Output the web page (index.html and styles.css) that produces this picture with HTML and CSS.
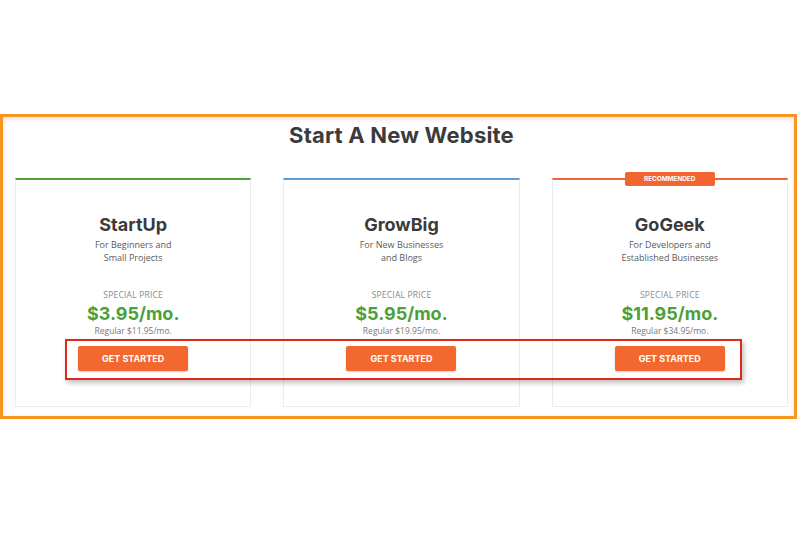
FILE: index.html
```html
<!DOCTYPE html>
<html>
<head>
<title>Start A New Website</title>
<link rel="stylesheet" href="styles.css">
</head>
<body>

<div class="shot">
	<div class="frame">
		<h1 class="page_title">Start A New Website</h1>
		<div class="plans">
			<div class="plan plan_green">
				<div class="plan_name">StartUp</div>
				<div class="plan_desc">For Beginners and<br>Small Projects</div>
				<div class="plan_label">SPECIAL PRICE</div>
				<div class="plan_price">$3.95/mo.</div>
				<div class="plan_regular">Regular $11.95/mo.</div>
				<button class="get_btn">GET STARTED</button>
			</div>
			<div class="plan plan_blue">
				<div class="plan_name">GrowBig</div>
				<div class="plan_desc">For New Businesses<br>and Blogs</div>
				<div class="plan_label">SPECIAL PRICE</div>
				<div class="plan_price">$5.95/mo.</div>
				<div class="plan_regular">Regular $19.95/mo.</div>
				<button class="get_btn">GET STARTED</button>
			</div>
			<div class="plan plan_orange">
				<div class="badge">RECOMMENDED</div>
				<div class="plan_name">GoGeek</div>
				<div class="plan_desc">For Developers and<br>Established Businesses</div>
				<div class="plan_label">SPECIAL PRICE</div>
				<div class="plan_price">$11.95/mo.</div>
				<div class="plan_regular">Regular $34.95/mo.</div>
				<button class="get_btn">GET STARTED</button>
			</div>
		</div>
	</div>
	<div class="highlight"></div>
</div>

</body>
</html>
```

FILE: styles.css
```css
	body
	{
		margin : 0;
		background-color : white;
		font-family : "Open Sans", sans-serif;
	}
	.shot
	{
		position : relative;
		width : 800px;
		height : 533px;
		padding-top : 114px;
		box-sizing : border-box;
	}
	.frame
	{
		width : 797px;
		border : 3px solid #f7961f;
		box-sizing : border-box;
		box-shadow : inset 0 2px 5px rgba(0,0,0,0.12);
		padding : 0 6px 9px 12px;
	}
	.page_title
	{
		margin : 0;
		padding-top : 4px;
		height : 61px;
		box-sizing : border-box;
		text-align : center;
		font-family : Inter, sans-serif;
		font-weight : 700;
		font-size : 22px;
		line-height : 28px;
		color : #3b3b3b;
		letter-spacing : 0.2px;
	}
	.plans
	{
		display : flex;
		gap : 32px;
	}
	.plan
	{
		position : relative;
		flex : 1;
		height : 229px;
		border : 1px solid #ececec;
		border-top : 2px solid #4d9f37;
		box-sizing : border-box;
		text-align : center;
		padding-top : 33px;
	}
	.plan_blue
	{
		border-top-color : #5b9ad6;
	}
	.plan_orange
	{
		border-top-color : #ef6237;
	}
	.plan_name
	{
		font-family : Inter, sans-serif;
		font-weight : 700;
		font-size : 18px;
		line-height : 24px;
		color : #3b3b3b;
	}
	.plan_desc
	{
		margin-top : 1px;
		font-size : 9px;
		line-height : 13px;
		color : #5a5a5a;
	}
	.plan_label
	{
		margin-top : 25px;
		font-size : 8.5px;
		line-height : 12px;
		color : #8a8a8a;
		letter-spacing : 0.2px;
	}
	.plan_price
	{
		margin-top : 2px;
		font-family : Inter, sans-serif;
		font-weight : 700;
		font-size : 18px;
		line-height : 22px;
		color : #4d9f37;
	}
	.plan_regular
	{
		font-size : 8.5px;
		line-height : 12px;
		color : #777777;
	}
	.get_btn
	{
		display : block;
		margin : 9px auto 0;
		width : 110px;
		height : 25px;
		border : 0;
		border-radius : 2px;
		background-color : #f3682f;
		color : white;
		font-family : Inter, sans-serif;
		font-weight : 700;
		font-size : 9px;
		box-shadow : 0 1px 2px rgba(0,0,0,0.2);
	}
	.badge
	{
		position : absolute;
		left : 72px;
		top : -8px;
		width : 90px;
		height : 14px;
		border-radius : 2px;
		background-color : #f26430;
		color : white;
		font-family : Inter, sans-serif;
		font-weight : 700;
		font-size : 6.5px;
		line-height : 14px;
		letter-spacing : -0.1px;
	}
	/* red annotation box drawn over the buttons */
	.highlight
	{
		position : absolute;
		left : 65px;
		top : 339px;
		width : 677px;
		height : 41px;
		border : 2px solid #e3261a;
		box-sizing : border-box;
		box-shadow : 2px 3px 5px rgba(0,0,0,0.25);
	}
```
